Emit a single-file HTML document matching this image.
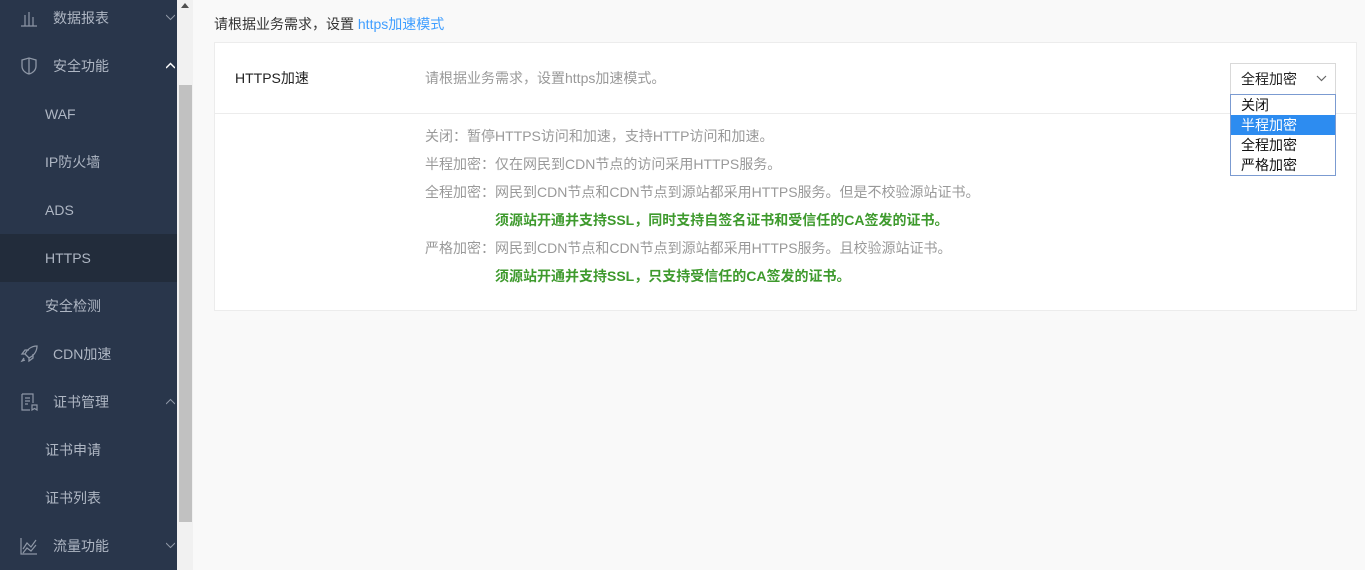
<!DOCTYPE html>
<html><head><meta charset="utf-8"><style>
*{margin:0;padding:0;box-sizing:border-box}
body{width:1365px;height:570px;overflow:hidden;background:#f9f9f9;font-family:"Liberation Sans","Noto Sans CJK SC",sans-serif;font-size:14px;position:relative}
.side{position:absolute;left:0;top:0;width:177px;height:570px;background:#29364b}
.it{position:absolute;left:0;width:177px;height:48px;line-height:48px;color:#aeb6c3;font-size:14px}
.it .t{position:absolute;left:53px}
.it.sub .t{left:45px}
.it.act{background:#222c3b}
.ic{position:absolute;left:20px;top:15px;width:18px;height:18px}
.ar{position:absolute;left:166px;top:19px;width:9px;height:9px}
.sb{position:absolute;left:177px;top:0;width:16px;height:570px;background:#f1f1f1}
.th{position:absolute;left:179px;top:85px;width:13px;height:437px;background:#c1c1c1}
.title{position:absolute;left:214px;top:14px;color:#333}
.title a{color:#409eff;text-decoration:none}
.panel{position:absolute;left:214px;top:42px;width:1143px;height:269px;background:#fff;border:1px solid #ececec}
.row1{height:71px;border-bottom:1px solid #ececec;position:relative}
.lab{position:absolute;left:20px;top:25px;color:#222}
.desc{position:absolute;left:210px;top:25px;color:#999}
.sel{position:absolute;left:1015px;top:20px;width:106px;height:32px;border:1px solid #d9d9d9;line-height:30px;padding-left:10px;color:#222}
.sel svg{position:absolute;right:8px;top:11px}
.dd{position:absolute;left:1230px;top:94px;width:106px;height:82px;border:1px solid #7b9bd1;background:#fff;color:#111;font-size:14px}
.dd div{height:20px;line-height:20px;padding-left:10px}
.dd .h{background:#2d8cf0;color:#fff}
.lines{position:absolute;left:210px;top:79px}
.lines div{height:28px;line-height:28px;color:#999;white-space:nowrap}
.lines .g{color:#3e9a2d;font-weight:bold;padding-left:70px}
</style></head><body>
<div class="side">
<div class="it" style="top:-6px"><svg class="ic" viewBox="0 0 18 18" fill="none" stroke="#8e97a6" stroke-width="1.2"><path d="M1 17h16M5 6v11M9 3v14M13 8v9"/></svg><span class="t">数据报表</span><svg class="ar" viewBox="0 0 9 9" fill="none" stroke="#8e97a6"><path d="M0 2l4.5 4.5L9 2"/></svg></div>
<div class="it" style="top:42px"><svg class="ic" viewBox="0 0 18 18" fill="none" stroke="#8e97a6" stroke-width="1.3"><path d="M2 3l7-2 7 2v6c0 4-3 7-7 8-4-1-7-4-7-8z M9 1v16"/></svg><span class="t">安全功能</span><svg class="ar" viewBox="0 0 9 9" fill="none" stroke="#fff" stroke-width="1.5"><path d="M0 7l4.5-4.5L9 7"/></svg></div>
<div class="it sub" style="top:90px"><span class="t">WAF</span></div>
<div class="it sub" style="top:138px"><span class="t">IP防火墙</span></div>
<div class="it sub" style="top:186px"><span class="t">ADS</span></div>
<div class="it sub act" style="top:234px"><span class="t">HTTPS</span></div>
<div class="it sub" style="top:282px"><span class="t">安全检测</span></div>
<div class="it" style="top:330px"><svg class="ic" viewBox="0 0 18 18" fill="none" stroke="#8e97a6" stroke-width="1.3"><path d="M17 1C11 1 7 5 5 9l4 4c4-2 8-6 8-12zM5 9H2l3-4h4M9 13v3l4-3V9M4 13l-2 3 3-1"/></svg><span class="t">CDN加速</span></div>
<div class="it" style="top:378px"><svg class="ic" viewBox="0 0 18 18" fill="none" stroke="#8e97a6" stroke-width="1.2"><path d="M2 1h11v9M2 1v16h8M5 5h5M5 8h5M5 11h3M12 12h5v5l-2.5-1.5L12 17z"/></svg><span class="t">证书管理</span><svg class="ar" viewBox="0 0 9 9" fill="none" stroke="#8e97a6"><path d="M0 7l4.5-4.5L9 7"/></svg></div>
<div class="it sub" style="top:426px"><span class="t">证书申请</span></div>
<div class="it sub" style="top:474px"><span class="t">证书列表</span></div>
<div class="it" style="top:522px"><svg class="ic" viewBox="0 0 18 18" fill="none" stroke="#8e97a6" stroke-width="1.2"><path d="M1 1v16h16M3 12l4-6 4 4 5-7M3 16l4-5 4 3 5-6"/></svg><span class="t">流量功能</span><svg class="ar" viewBox="0 0 9 9" fill="none" stroke="#8e97a6"><path d="M0 2l4.5 4.5L9 2"/></svg></div>
</div>
<div class="sb"></div><div class="th"></div>
<svg style="position:absolute;left:181px;top:3px" width="8" height="5"><path d="M0 5L4 0L8 5z" fill="#505050"/></svg>
<div class="title">请根据业务需求，设置 <a>https加速模式</a></div>
<div class="panel">
<div class="row1"><span class="lab">HTTPS加速</span><span class="desc">请根据业务需求，设置https加速模式。</span>
<div class="sel">全程加密<svg width="11" height="7" viewBox="0 0 11 7" fill="none" stroke="#666" stroke-width="1.2"><path d="M1 1l4.5 4.5L10 1"/></svg></div></div>
<div class="lines">
<div>关闭：暂停HTTPS访问和加速，支持HTTP访问和加速。</div>
<div>半程加密：仅在网民到CDN节点的访问采用HTTPS服务。</div>
<div>全程加密：网民到CDN节点和CDN节点到源站都采用HTTPS服务。但是不校验源站证书。</div>
<div class="g">须源站开通并支持SSL，同时支持自签名证书和受信任的CA签发的证书。</div>
<div>严格加密：网民到CDN节点和CDN节点到源站都采用HTTPS服务。且校验源站证书。</div>
<div class="g">须源站开通并支持SSL，只支持受信任的CA签发的证书。</div>
</div>
</div>
<div class="dd"><div>关闭</div><div class="h">半程加密</div><div>全程加密</div><div>严格加密</div></div>
</body></html>
